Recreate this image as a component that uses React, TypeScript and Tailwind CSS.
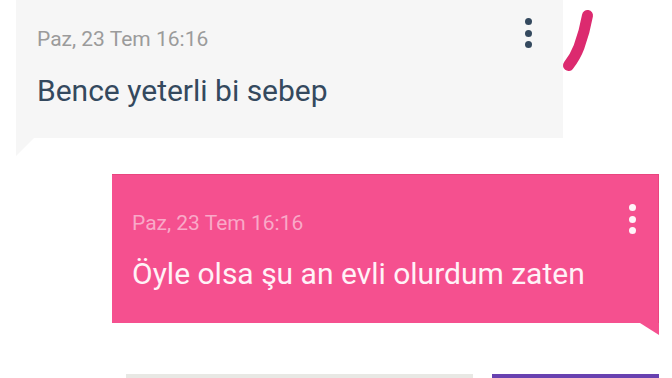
import React from "react";

function Dots({ color }: { color: string }) {
  return (
    <div className="flex flex-col gap-[4.5px]">
      <div className={`w-[7px] h-[7px] rounded-full ${color}`} />
      <div className={`w-[7px] h-[7px] rounded-full ${color}`} />
      <div className={`w-[7px] h-[7px] rounded-full ${color}`} />
    </div>
  );
}

export default function App() {
  return (
    <div
      className="relative w-[672px] h-[378px] overflow-hidden bg-white flex flex-col"
      style={{ fontFamily: "Roboto, 'Noto Sans', sans-serif" }}
    >
      {/* incoming bubble */}
      <div className="relative shrink-0 ml-[16px] w-[547px] h-[138px] bg-[#f6f6f6] flex pl-[21px] pr-[31px]">
        <div className="flex-1 pt-[29px]">
          <div className="text-[21px] leading-[21px] text-[#9b9b9b]">Paz, 23 Tem 16:16</div>
          <div className="mt-[26px] text-[30px] leading-[30px] text-[#34495e]">Bence yeterli bi sebep</div>
        </div>
        <div className="pt-[18px]">
          <Dots color="bg-[#34495e]" />
        </div>
        <div className="absolute left-0 top-[138px] w-[18px] h-[18px] bg-[#f6f6f6] [clip-path:polygon(0_0,100%_0,0_100%)]" />
      </div>

      {/* outgoing bubble */}
      <div className="relative shrink-0 mt-[36px] ml-[112px] w-[547px] h-[149px] bg-[#f5508f] border-t border-r border-[#e9457f] flex pl-[20px] pr-[22px]">
        <div className="flex-1 pt-[38px]">
          <div className="text-[21px] leading-[21px] text-[#f9a9c8]">Paz, 23 Tem 16:16</div>
          <div className="mt-[25px] text-[30px] leading-[30px] text-[#fff2f7]">Öyle olsa şu an evli olurdum zaten</div>
        </div>
        <div className="pt-[29px]">
          <Dots color="bg-[#fff5f9]" />
        </div>
        <div className="absolute right-[-1px] top-[148px] w-[19px] h-[12px] bg-[#f5508f] [clip-path:polygon(0_0,100%_0,100%_100%)]" />
      </div>

      {/* bottom row */}
      <div className="shrink-0 mt-[51px] flex">
        <div className="ml-[126px] w-[347px] h-[10px] bg-[#e8e8e4]" />
        <div className="ml-[19px] w-[167px] h-[10px] bg-[#6841b0]" />
      </div>

      {/* pen scribble */}
      <svg className="absolute left-[555px] top-[3px]" width="45" height="77" viewBox="555 3 45 77">
        <path
          d="M587.5 15.5 C 586 24, 583 36, 579 47 C 576 55, 572 61, 568.5 65.5"
          stroke="#dc2a6f"
          strokeWidth="11"
          strokeLinecap="round"
          strokeLinejoin="round"
          fill="none"
        />
      </svg>
    </div>
  );
}
